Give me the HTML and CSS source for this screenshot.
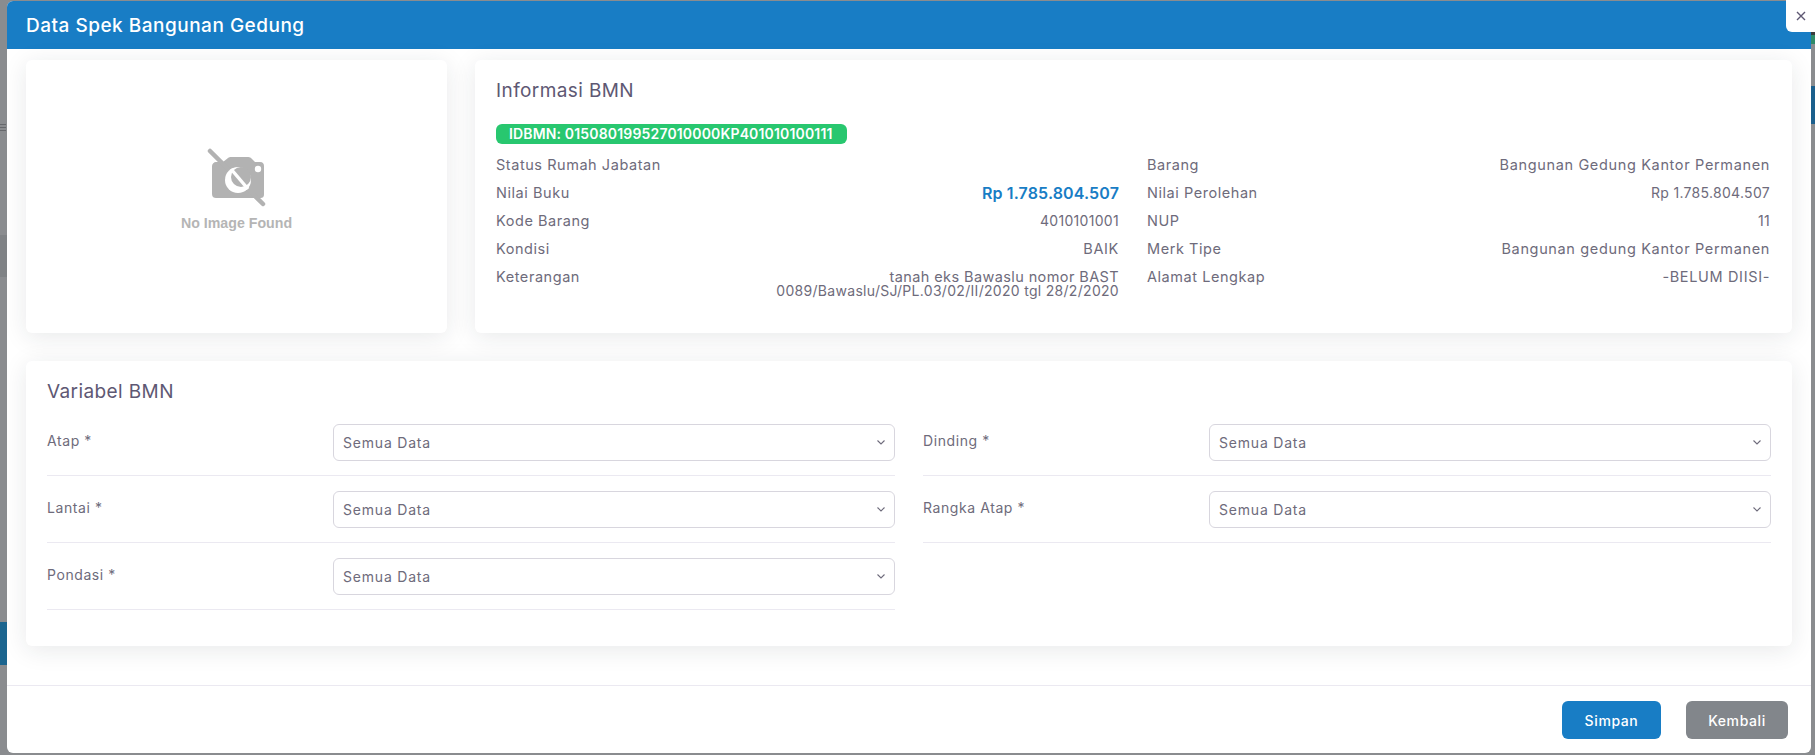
FILE: index.html
```html
<!DOCTYPE html>
<html lang="id">
<head>
    <meta charset="UTF-8">
    <title>Data Spek Bangunan Gedung</title>
    <link rel="stylesheet" href="styles.css">
</head>
<body>
    <!-- page behind the backdrop, only its edges show -->
    <div class="bg-menu"><span></span><span></span><span></span></div>
    <div class="bg-band-left-grey"></div>
    <div class="bg-band-left"></div>
    <div class="bg-green"></div>
    <div class="bg-band-right"></div>

    <div class="modal">
        <div class="modal-header">Data Spek Bangunan Gedung</div>

        <div class="modal-body">
            <div class="top-row">
                <div class="card image-card">
                    <svg class="no-image" width="62" height="62" viewBox="0 0 62 62">
                        <path fill="#b2b2b2" d="M6 20c0-2 2-4 4-4h7l5-4c1-1 2-1 3-1h16c2 0 3 0 4 1l4 4h5c3 0 4 2 4 4v28c0 3-1 4-4 4H10c-2 0-4-1-4-4z"/>
                        <path stroke="#b2b2b2" stroke-width="4.5" stroke-linecap="round" d="M4 5l53 53"/>
                        <circle cx="32" cy="34" r="13" fill="#fff"/>
                        <circle cx="35" cy="31" r="10" fill="#b2b2b2"/>
                        <path stroke="#fff" stroke-width="3.4" d="M25 23l17 20"/>
                        <circle cx="52" cy="23" r="3.2" fill="#fff"/>
                    </svg>
                    <div class="no-image-text">No Image Found</div>
                </div>

                <div class="card info-card">
                    <h2 class="card-title">Informasi BMN</h2>
                    <span class="badge">IDBMN: 015080199527010000KP401010100111</span>
                    <div class="info-grid">
                        <div class="info-row"><span>Status Rumah Jabatan</span><span></span></div>
                        <div class="info-row"><span>Barang</span><span class="value">Bangunan Gedung Kantor Permanen</span></div>
                        <div class="info-row"><span>Nilai Buku</span><span class="price">Rp 1.785.804.507</span></div>
                        <div class="info-row"><span>Nilai Perolehan</span><span class="num">Rp 1.785.804.507</span></div>
                        <div class="info-row"><span>Kode Barang</span><span class="num">4010101001</span></div>
                        <div class="info-row"><span>NUP</span><span class="num">11</span></div>
                        <div class="info-row"><span>Kondisi</span><span class="value">BAIK</span></div>
                        <div class="info-row"><span>Merk Tipe</span><span class="value">Bangunan gedung Kantor Permanen</span></div>
                        <div class="info-row"><span>Keterangan</span><span class="value note">tanah eks Bawaslu nomor BAST<br><span class="num">0089/Bawaslu/SJ/PL.03/02/II/2020 tgl 28/2/2020</span></span></div>
                        <div class="info-row"><span>Alamat Lengkap</span><span class="value">-BELUM DIISI-</span></div>
                    </div>
                </div>
            </div>

            <div class="card variable-card">
                <h2 class="card-title">Variabel BMN</h2>
                <div class="form-grid">
                    <div class="form-row">
                        <label>Atap *</label>
                        <div class="select">Semua Data<svg width="8" height="5" viewBox="0 0 8 5"><path d="M.5.5L4 4 7.5.5" fill="none" stroke="#6e6b7b" stroke-width="1.1"/></svg></div>
                    </div>
                    <div class="form-row">
                        <label>Dinding *</label>
                        <div class="select">Semua Data<svg width="8" height="5" viewBox="0 0 8 5"><path d="M.5.5L4 4 7.5.5" fill="none" stroke="#6e6b7b" stroke-width="1.1"/></svg></div>
                    </div>
                    <div class="form-row">
                        <label>Lantai *</label>
                        <div class="select">Semua Data<svg width="8" height="5" viewBox="0 0 8 5"><path d="M.5.5L4 4 7.5.5" fill="none" stroke="#6e6b7b" stroke-width="1.1"/></svg></div>
                    </div>
                    <div class="form-row">
                        <label>Rangka Atap *</label>
                        <div class="select">Semua Data<svg width="8" height="5" viewBox="0 0 8 5"><path d="M.5.5L4 4 7.5.5" fill="none" stroke="#6e6b7b" stroke-width="1.1"/></svg></div>
                    </div>
                    <div class="form-row">
                        <label>Pondasi *</label>
                        <div class="select">Semua Data<svg width="8" height="5" viewBox="0 0 8 5"><path d="M.5.5L4 4 7.5.5" fill="none" stroke="#6e6b7b" stroke-width="1.1"/></svg></div>
                    </div>
                </div>
            </div>
        </div>

        <div class="modal-footer">
            <button class="button save">Simpan</button>
            <button class="button back">Kembali</button>
        </div>
    </div>

    <button class="close" aria-label="Tutup">
        <svg width="10" height="10" viewBox="0 0 10 10"><path d="M1 1l8 8M9 1l-8 8" stroke="#5e5873" stroke-width="1.4"/></svg>
    </button>
</body>
</html>
```

FILE: styles.css
```css
* {
    box-sizing: border-box;
}
body {
    margin: 0;
    width: 1815px;
    height: 755px;
    padding: 1px 4px 2px 7px;
    overflow: hidden;
    position: relative;
    background: #8a8c8f;
    font-family: Inter, "Liberation Sans", sans-serif;
    font-size: 14px;
    color: #6e6b7b;
}

/* Page behind the backdrop */
.bg-menu {
    position: absolute;
    left: 0;
    top: 124px;
    width: 6px;
}
.bg-menu span {
    display: block;
    height: 1px;
    margin-bottom: 2px;
    background: #66686c;
}
.bg-band-left-grey {
    position: absolute;
    left: 0;
    top: 235px;
    width: 7px;
    height: 42px;
    background: #7f8285;
}
.bg-band-left {
    position: absolute;
    left: 0;
    top: 622px;
    width: 7px;
    height: 43px;
    background: #1b658f;
}
.bg-green {
    position: absolute;
    right: 0;
    top: 32px;
    width: 4px;
    height: 12px;
    border-top: 3px solid #3a3c3e;
    background: #2f8a68;
}
.bg-band-right {
    position: absolute;
    right: 0;
    top: 86px;
    width: 4px;
    height: 38px;
    background: #1b5f8c;
}

/* Modal */
.modal {
    position: relative;
    height: 752px;
    display: flex;
    flex-direction: column;
    background: #fff;
    border-radius: 6px;
    overflow: hidden;
}
.modal-header {
    height: 48px;
    flex: none;
    padding: 0 19px;
    display: flex;
    align-items: center;
    background: #187dc5;
    color: #fff;
    font-size: 19px;
    font-weight: 500;
    letter-spacing: 0.5px;
}
.modal-body {
    flex: 1;
    padding: 11px 19px 0;
}
.top-row {
    display: flex;
    gap: 28px;
    margin-bottom: 28px;
}
.card {
    background: #fff;
    border-radius: 6px;
    box-shadow: 0 4px 24px rgba(34, 41, 47, 0.1);
}
.image-card {
    width: 421px;
    height: 273px;
    flex: none;
    padding-top: 86px;
    display: flex;
    flex-direction: column;
    align-items: center;
}
.no-image {
    display: block;
}
.no-image-text {
    margin-top: 7px;
    font-family: "Liberation Sans", sans-serif;
    font-size: 14.2px;
    font-weight: bold;
    color: #b5b5b5;
}
.info-card {
    flex: 1;
    height: 273px;
    padding: 20px 21px;
}
.card-title {
    margin: 0;
    font-size: 19px;
    line-height: 22px;
    font-weight: 400;
    letter-spacing: 0.4px;
    color: #5e5873;
}
.badge {
    display: block;
    width: 351px;
    height: 20px;
    margin: 22px 0 7px;
    padding-left: 13px;
    background: #28c76f;
    border-radius: 6px;
    color: #fff;
    font-size: 14px;
    line-height: 20px;
    font-weight: 600;
    letter-spacing: 0.16px;
    white-space: nowrap;
}
.info-grid {
    display: grid;
    grid-template-columns: 623px 623px;
    column-gap: 28px;
}
.info-row {
    display: flex;
    justify-content: space-between;
    padding: 7px 0;
    font-size: 14.5px;
    line-height: 14px;
    letter-spacing: 0.55px;
}
.value {
    text-align: right;
    letter-spacing: 0.65px;
}
.note {
    letter-spacing: 0.4px;
}
.num {
    font-size: 14px;
    letter-spacing: 0.3px;
}
.price {
    font-size: 16px;
    font-weight: 600;
    color: #187dc5;
    letter-spacing: 0.13px;
}

.variable-card {
    height: 285px;
    padding: 20px 21px;
}
.form-grid {
    display: grid;
    grid-template-columns: 848px 848px;
    column-gap: 28px;
    margin-top: 20.6px;
}
.form-row {
    display: grid;
    grid-template-columns: 286px 1fr;
    align-items: center;
    padding-bottom: 14px;
    margin-bottom: 14.9px;
    border-bottom: 1px solid #ebe9f1;
    letter-spacing: 0.58px;
}
.form-row label {
    padding-bottom: 3px;
}
.select {
    height: 37.1px;
    padding: 0 9px;
    display: flex;
    align-items: center;
    justify-content: space-between;
    background: #fff;
    border: 1px solid #d8d6de;
    border-radius: 6px;
    letter-spacing: 0.8px;
}

.modal-footer {
    height: 68px;
    flex: none;
    padding: 15px 23px 0 0;
    display: flex;
    justify-content: flex-end;
    gap: 25px;
    border-top: 1px solid #ebe9f1;
}
.button {
    height: 38px;
    border: none;
    border-radius: 6px;
    color: #fff;
    font-family: inherit;
    font-size: 14px;
    font-weight: 500;
    letter-spacing: 0.6px;
}
.save {
    width: 99px;
    background: #187dc5;
}
.back {
    width: 102px;
    background: #82868b;
}
.close {
    position: absolute;
    right: 0;
    top: 0;
    width: 29px;
    height: 32px;
    padding: 0;
    border: none;
    border-radius: 0 0 0 6px;
    background: #fff;
    display: flex;
    align-items: center;
    justify-content: center;
}
```
